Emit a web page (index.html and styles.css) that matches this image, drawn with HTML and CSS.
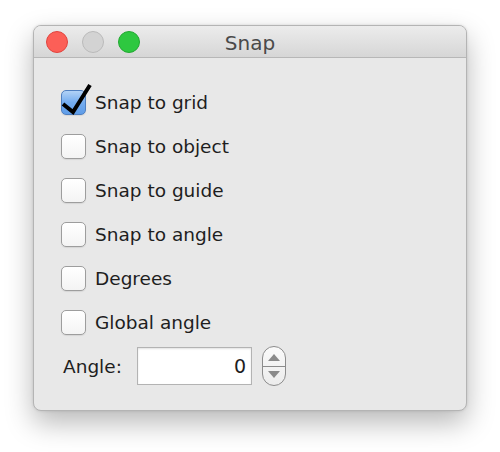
FILE: index.html
```html
<!DOCTYPE html>
<html>
<head>
<meta charset="utf-8">
<title>Snap</title>
<link rel="stylesheet" href="styles.css">
</head>
<body>
<div class="window">
  <div class="titlebar">
    <div class="lights">
      <span class="light red"></span>
      <span class="light gray"></span>
      <span class="light green"></span>
    </div>
    <div class="title">Snap</div>
  </div>
  <div class="content">
    <label class="row">
      <span class="box checked">
        <svg class="check" width="36" height="36" viewBox="0 0 36 36"><path d="M5 23 L15 31 L32 4" fill="none" stroke="#000" stroke-width="4" stroke-linejoin="miter" stroke-linecap="butt"/></svg>
      </span>
      <span class="text">Snap to grid</span>
    </label>
    <label class="row"><span class="box"></span><span class="text">Snap to object</span></label>
    <label class="row"><span class="box"></span><span class="text">Snap to guide</span></label>
    <label class="row"><span class="box"></span><span class="text">Snap to angle</span></label>
    <label class="row"><span class="box"></span><span class="text">Degrees</span></label>
    <label class="row"><span class="box"></span><span class="text">Global angle</span></label>
    <div class="row angle-row">
      <span class="label">Angle:</span>
      <span class="field">0</span>
      <span class="stepper">
        <span class="step up"><span class="tri-up"></span></span>
        <span class="step down"><span class="tri-down"></span></span>
      </span>
    </div>
  </div>
</div>
</body>
</html>
```
FILE: styles.css
```css
html, body {
  margin: 0;
  padding: 0;
  background: #ffffff;
}
body {
  width: 500px;
  height: 452px;
  padding: 25px 0 0 33px;
  box-sizing: border-box;
  font-family: "DejaVu Sans", "Liberation Sans", sans-serif;
}
.window {
  width: 434px;
  height: 386px;
  box-sizing: border-box;
  background: #e8e8e8;
  border: 1px solid #b4b4b4;
  border-radius: 8px;
  box-shadow: 0 12px 28px rgba(0,0,0,0.28), 0 0 3px rgba(0,0,0,0.12);
  overflow: hidden;
}
.titlebar {
  height: 32px;
  box-sizing: border-box;
  background: linear-gradient(#ececec, #d6d6d6);
  border-bottom: 1px solid #b7b7b7;
  display: flex;
  align-items: center;
  position: relative;
}
.lights {
  display: flex;
  gap: 14px;
  padding-left: 12px;
  padding-top: 1px;
}
.light {
  width: 22px;
  height: 22px;
  border-radius: 50%;
  box-sizing: border-box;
}
.red { background: #fc5f57; border: 1px solid #e0443e; }
.gray { background: #d3d3d3; border: 1px solid #bababa; }
.green { background: #2ec840; border: 1px solid #23a832; }
.title {
  position: absolute;
  left: 0;
  right: 0;
  top: 0;
  bottom: 0;
  display: flex;
  align-items: center;
  justify-content: center;
  font-size: 20px;
  color: #4a4a4a;
  padding-top: 2px;
}
.content {
  padding: 22px 0 0 27px;
  display: flex;
  flex-direction: column;
}
.row {
  height: 44px;
  display: flex;
  align-items: center;
}
.box {
  width: 25px;
  height: 25px;
  box-sizing: border-box;
  border: 1px solid #9d9d9d;
  border-radius: 5px;
  background: linear-gradient(#ffffff, #f4f4f4);
  box-shadow: 0 1px 1px rgba(0,0,0,0.08);
  position: relative;
  flex: none;
}
.box.checked {
  border-color: #4f7fc0;
  background: linear-gradient(#b2d2f6, #74acef 50%, #5f9de8);
}
.check {
  position: absolute;
  left: -4px;
  top: -10px;
}
.text {
  margin-left: 9px;
  font-size: 18.5px;
  color: #1e1e1e;
}
.angle-row .label {
  margin-left: 2px;
  font-size: 18.5px;
  color: #1e1e1e;
  width: 74px;
}
.field {
  width: 115px;
  height: 38px;
  box-sizing: border-box;
  background: #ffffff;
  border: 1px solid #b3b3b3;
  box-shadow: inset 0 1px 2px rgba(0,0,0,0.12);
  display: flex;
  align-items: center;
  justify-content: flex-end;
  padding-right: 5px;
  font-size: 19px;
  color: #1e1e1e;
}
.stepper {
  margin-left: 10px;
  width: 24px;
  height: 40px;
  box-sizing: border-box;
  border: 1.5px solid #8c8c8c;
  border-radius: 12px;
  background: linear-gradient(#fafafa, #ececec);
  display: flex;
  flex-direction: column;
  overflow: hidden;
}
.step {
  flex: 1;
  display: flex;
  align-items: center;
  justify-content: center;
}
.step.up {
  border-bottom: 1.5px solid #8c8c8c;
}
.tri-up {
  width: 0;
  height: 0;
  border-left: 6px solid transparent;
  border-right: 6px solid transparent;
  border-bottom: 7px solid #8a8a8a;
  margin-top: 3px;
}
.tri-down {
  width: 0;
  height: 0;
  border-left: 6px solid transparent;
  border-right: 6px solid transparent;
  border-top: 7px solid #8a8a8a;
  margin-bottom: 3px;
}
```
